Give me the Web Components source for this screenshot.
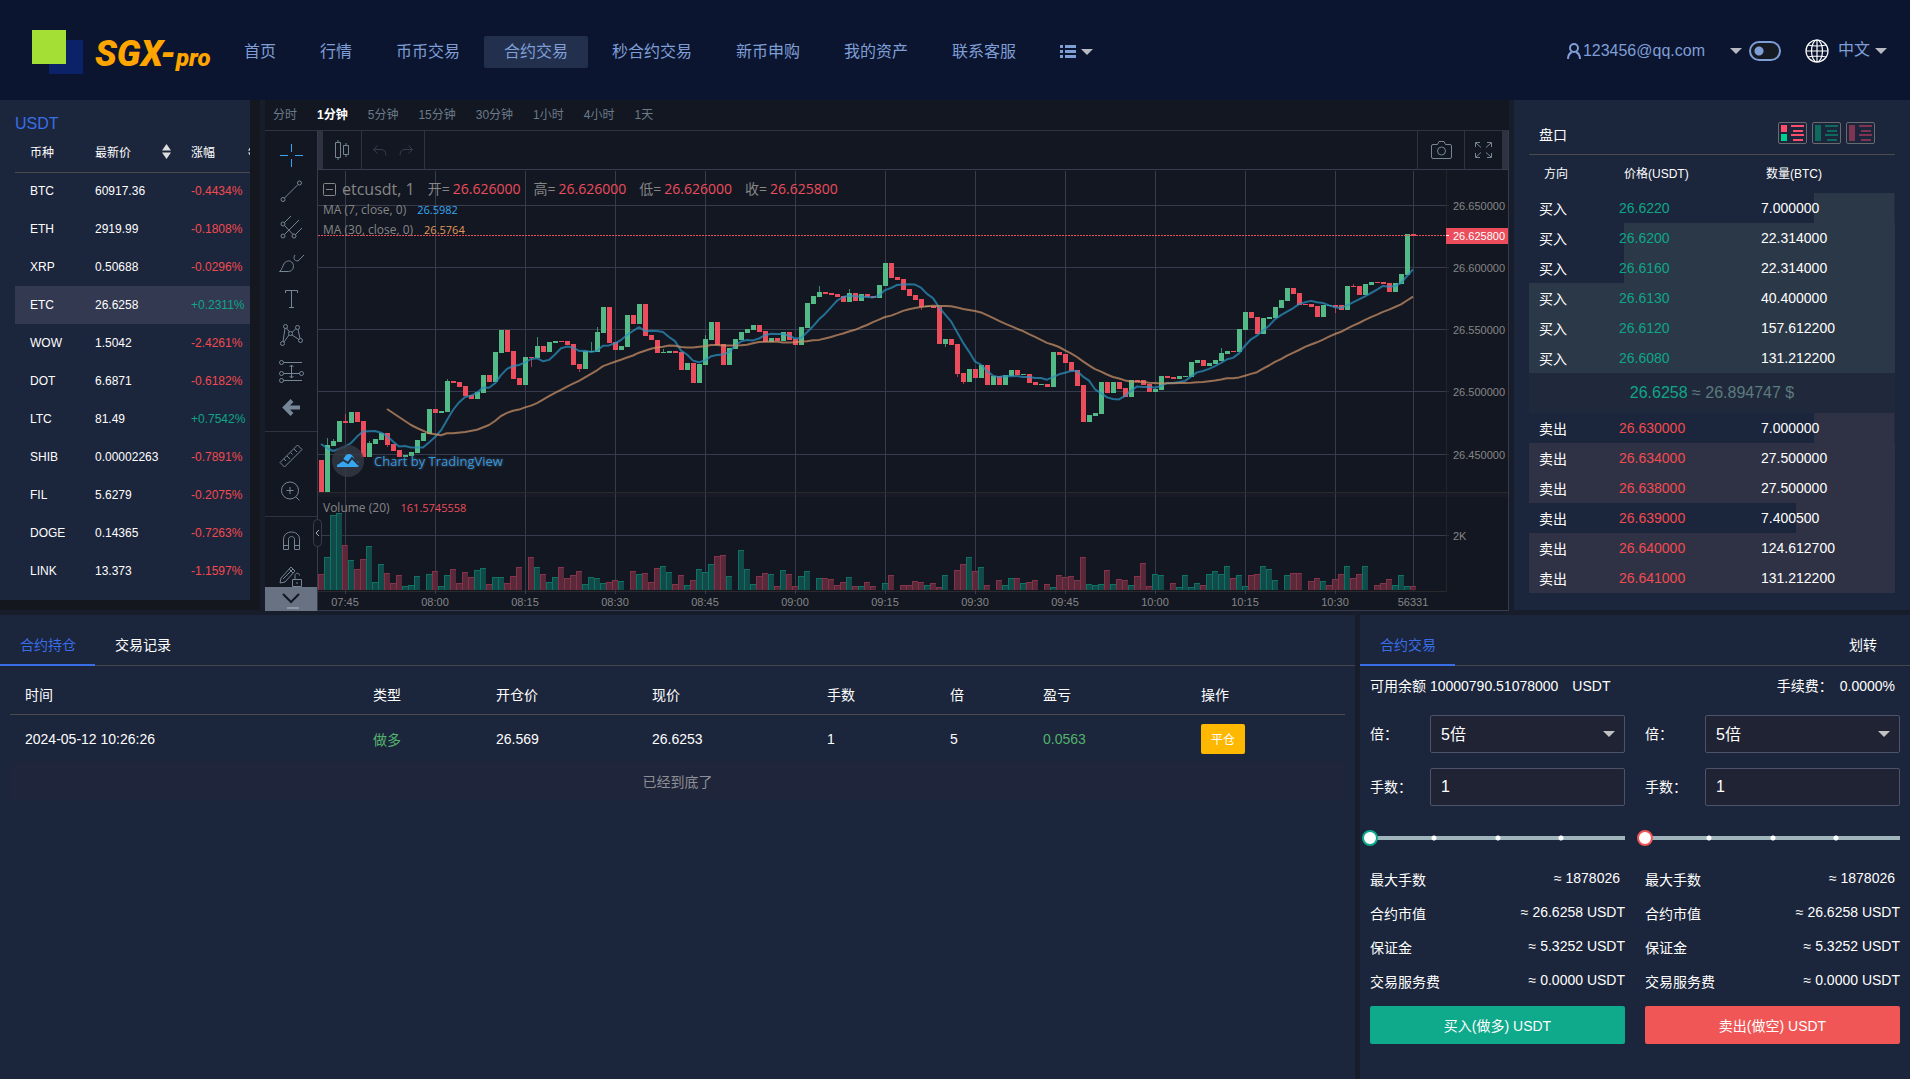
<!DOCTYPE html>
<html lang="zh-CN">
<head>
<meta charset="utf-8">
<title>SGX-pro</title>
<style>
html,body{margin:0;background:#171d2b}
body{font-family:"Liberation Sans","Noto Sans CJK SC",sans-serif;font-size:14px;color:#fff}
</style>
</head>
<body>
<sgx-app></sgx-app>
<script>
const define = (name, html, setup) => customElements.define(name, class extends HTMLElement {
  constructor() {
    super();
    const t = document.createElement('template');
    t.innerHTML = '<style>*{box-sizing:border-box}:host{box-sizing:border-box;display:block}button,input,select{font:inherit;color:inherit}button{cursor:pointer}button[aria-selected=true]{color:#3a6ee8}</style>' + html;
    this.attachShadow({mode: 'open'}).append(t.content.cloneNode(true));
  }
  connectedCallback() { if (setup) setup(this, this.shadowRoot); }
});

/* ---------- top bar ---------- */
const NAV = ['首页', '行情', '币币交易', '合约交易', '秒合约交易', '新币申购', '我的资产', '联系客服'];
define('sgx-topbar', `
<style>
:host{height:100px;background:#0b152f;color:#7f9ed6;font-size:16px}
header{height:100%;display:flex;align-items:center;padding:0 23px 0 32px}
.logo{display:flex;align-items:center;text-decoration:none}
.logo svg{display:block;margin-top:4px}
.word{margin:12px 0 0 11px;color:#ffa500;font:italic 900 36px/36px Roboto,sans-serif;width:117px;white-space:nowrap}
.word small{font-size:24px}
nav{display:flex;gap:4px;margin:3px 0 0 12px;align-items:center}
nav a{color:inherit;text-decoration:none;padding:0 20px;height:32px;line-height:32px;border-radius:2px;white-space:nowrap}
nav a.on{background:#22304e}
button{background:none;border:0;padding:0;display:flex;align-items:center;gap:5px;height:32px;color:inherit}
nav button{padding:0 20px}
.caret{width:0;height:0;border:6px solid transparent;border-top-color:#b8bac2;border-bottom:0}
.side{margin:2px 0 0 auto;display:flex;align-items:center}
.user{gap:2px}.user .caret{margin-left:23px}
.lang{gap:0;margin-left:24px}.lang span{margin:0 5px 0 9px;line-height:20px;padding-bottom:3px}
.switch{appearance:none;width:32px;height:20px;margin:0 0 0 7px;border:2px solid #7f9ed6;border-radius:10px;background:radial-gradient(circle at 8px 8px,#7f9ed6 4px,#161a22 5px)}
</style>
<header>
<a class="logo" href="#" aria-label="SGX-pro"><svg width="52" height="44"><path fill="#0b2269" d="M17 10h34v34H17z"/><path fill="#a3df35" d="M0 0h34v34H0z"/></svg><span class="word">SGX-<small>pro</small></span></a>
<nav>${NAV.map(n => `<a href="#"${n === '合约交易' ? ' class="on"' : ''}>${n}</a>`).join('')}
<button aria-label="更多"><svg width="16" height="13" fill="#7f9ed6"><path d="M0 0h3v3H0zM0 5h3v3H0zM0 10h3v3H0zM5 0h11v3H5zM5 5h11v3H5zM5 10h11v3H5z"/></svg><i class="caret"></i></button></nav>
<div class="side">
<button class="user"><svg width="14" height="17" fill="none" stroke="#7f9ed6" stroke-width="2"><circle cx="7" cy="5" r="4"/><path d="M1 16c0-4 2-6 4-7M13 16c0-4-2-6-4-7"/></svg>123456@qq.com<i class="caret"></i></button>
<input class="switch" type="checkbox" aria-label="主题">
<button class="lang"><svg width="24" height="24" fill="none" stroke="#fff" stroke-width="1.2"><circle cx="12" cy="12" r="11"/><ellipse cx="12" cy="12" rx="5.5" ry="11"/><path d="M12 1v22M1 12h22M3 6q9 2 18 0M3 18q9-2 18 0"/></svg><span>中文</span><i class="caret"></i></button>
</div>
</header>`);

/* ---------- coin list ---------- */
const COINS = [['BTC','60917.36','-0.4434%'],['ETH','2919.99','-0.1808%'],['XRP','0.50688','-0.0296%'],['ETC','26.6258','+0.2311%'],['WOW','1.5042','-2.4261%'],['DOT','6.6871','-0.6182%'],['LTC','81.49','+0.7542%'],['SHIB','0.00002263','-0.7891%'],['FIL','5.6279','-0.2075%'],['DOGE','0.14365','-0.7263%'],['LINK','13.373','-1.1597%']];
const SORT = '<svg width="9" height="15" fill="#ddd" aria-hidden="true"><path d="M4.500 0L9 6.500H0zM0 8.500h9L4.500 15z"/></svg>';
define('sgx-coins', `
<style>
:host{width:260px;height:510px;flex:none;border:solid #14181e;border-width:0 10px 10px 0;background:#1b253b;overflow:hidden;padding:15px 0 0 15px;font-size:12px}
h2{margin:0;font-size:16px;font-weight:400;line-height:18px;color:#3a6ee8}
table{border-collapse:collapse;table-layout:fixed;width:252px}
th,td{padding:0;text-align:left;font-weight:400;height:38px}
th{height:39px;border-bottom:1px solid #4b4a4c;padding-bottom:2px}
th div{display:flex;justify-content:space-between;align-items:center;padding-right:20px}
th:last-child div{padding:0 10px 0 0}
th:first-child,td:first-child{padding-left:15px}
.on{background:#323951}
.d{color:#f04b50}.u{color:#0fa587}
</style>
<h2>USDT</h2>
<table><colgroup><col style="width:80px"><col style="width:96px"><col></colgroup>
<thead><tr><th>币种</th><th><div>最新价${SORT}</div></th><th><div>涨幅${SORT}</div></th></tr></thead>
<tbody>${COINS.map(([a, b, c]) => `<tr${a === 'ETC' ? ' class="on"' : ''}><td>${a}</td><td>${b}</td><td class="${c[0] === '-' ? 'd' : 'u'}">${c}</td></tr>`).join('')}</tbody></table>`);

/* ---------- chart data ---------- */
/* first minute index of the visible range; each candle is colour, open/close edges and an optional wick end */
const FIRST = -4;
const CANDLES = `r1095-1191 g1050-1191w1029 g1038-1053w1032 g978-1041 r978-984w957 g951-984 r951-981 r978-1086 g1044-1086w1037 g1032-1047 g1014-1035 r1014-1050w1056 r1047-1068 r1065-1086 g1080-1086 g1071-1083 g1035-1074 g1014-1038 g942-1017 r942-954 g948-954 g858-951w852 r858-864 r861-876 r873-903 r900-912 g891-912 g840-894 r840-861 g771-861 g705-774 r705-771 r768-852 r849-870 g786-870 r786-790w816 g753-789w726 r753-771 g741-770 g738-745 r738-741 r738-750 r747-810 r807-822w831 g768-822 g768-771w741 g711-771w697 g636-714 r636-744 r741-765 g753-765 g660-756 r660-687 g627-687 r627-722 r720-735 r735-773 g770-774w762 g768-773 r768-774 r771-825 g804-825 r804-864 g807-864 g732-810w720 g681-735 r681-750 r747-810 g759-810 g732-762 g711-735 g702-714 g690-705 r690-710 r708-741 g729-740 r729-738 g711-738 r711-735 r732-750 g696-750 g624-698 g603-627 g591-606w573 r591-597 r594-600 r597-606 r603-621 g594-621w582 r594-618 g597-618 r597-605 r603-609 g570-609 g504-572 r504-549 r546-555 r552-585 r582-603 r600-615 r612-636w645 g633-636 r633-639 r636-747 g732-747w756 r732-750 r747-837w846 r834-861w866 g822-861 r822-849 g810-849 r810-870 g843-870 r843-870 g840-870 g825-843 r825-840 g837-840 r837-864 r861-870 g867-870 r867-876 g771-875 r771-780 r777-804 r801-828 r825-873 r870-981 g960-981 g954-963 g861-957 r861-894 g861-894 r861-882 r879-906 g855-906 r855-861 r855-870 r867-891 g882-891 g843-885 r843-849 r846-852 g843-852 g843-846 g801-846 g795-804 r795-813 g804-813 g795-807 g774-798w759 g768-777 r768-771 g702-771 g651-705 r651-669 r666-717 g669-717 g666-672 g636-669 g615-639 g579-618 r579-597 r594-630 r627-630 r627-636 r633-666 g630-666 g630-633 r630-636w654 r630-645 g573-645 r573-576w567 r573-600 g567-600 g561-570 r561-564 r561-567 r564-591 g564-591 g537-567 g417-540 r417-423`
  .split(' ').map(s => { const m = s.match(/(\w)(\d+)-(\d+)(?:w(\d+))?/); return {up: m[1] === 'g', a: +m[2], b: +m[3], w: m[4] ? +m[4] : null}; });
const VOLUME = `r612 g561 g435 g430 r525 g570 r598 r567 g528 g636 g582 r609 r639 r615 g648 g645 g618 - g612 r603 g648 g615 r598 r639 r606 r621 g600 g594 r642 g621 g621 r639 r618 r591 - r561 g591 r612 g636 g621 r591 r624 r615 r603 g642 g621 g624 g639 r636 r630 g633 - r603 g612 r609 r636 r594 g588 g606 r642 r615 g645 r630 g597 g606 g582 r558 r555 g618 - g540 g597 g642 r618 r609 g612 r648 g600 r612 r648 g618 g603 - g624 r624 r627 r645 r636 g621 r648 g648 r636 r648 - g639 r615 - r645 r645 r633 r636 g645 r639 r651 g615 - r600 r582 g561 r603 g591 r645 - r630 g645 g624 r624 g639 r636 r630 - r642 g651 r615 r621 r618 r630 r561 g642 g645 g642 r600 g642 r627 r630 g645 r618 r579 r648 g612 g615 - r639 g651 g615 g651 g639 r645 g612 g603 g612 g588 r624 g615 g648 r615 r612 g588 g597 g630 - g615 r609 r609 - r633 r624 g633 r645 r627 r612 g588 r624 r612 g588 - r645 r639 r627 g645 g615 g648 r648`.split(' ');
const CLOSES = CANDLES.map(c => c.up ? c.a : c.b);
const average = (i, n) => { const k = i - FIRST; let s = 0; for (let j = k - n + 1; j <= k; j++) s += CLOSES[j]; return s / n; };
const MA7 = [[-4,1047],[-3,1059],[-2,1068],[-1,1062],[0,1055],[1,1044]];
for (let i = 2; i <= 178; i++) MA7.push([i, average(i, 7)]);
const MA30 = [[7,942],[9,966],[11,990],[12,999],[14,1015],[16,1021],[17,1015],[18,1015],[20,1011],[22,1004],[24,990],[25,978]];
for (let i = 26; i <= 178; i++) MA30.push([i, average(i, 30)]);

function plot(W) {
  const X = i => W - 95 - 6 * (178 - i), Y = v => Math.round(v / 3) - 75;
  const rect = (x, y, w, h, f, more = '') => `<rect x="${x}" y="${y}" width="${w}" height="${h}" fill="${f}" ${more}/>`;
  const text = (x, y, s, more = '') => `<text x="${x}" y="${y}" ${more}>${s}</text>`;
  const axis = W - 62, G = '#363c4e';
  let o = '';
  o += rect(0, 323, W, 4, '#181b26');
  for (let i = 0; i <= 165; i += 15) o += rect(X(i), 1, 1, 420, G);
  o += rect(X(178), 1, 1, 420, G);
  const rows = [[35, '26.650000'], [97, '26.600000'], [159, '26.550000'], [221, '26.500000'], [284, '26.450000'], [365, '2K']];
  for (const [y, s] of rows) o += rect(0, y, axis, 1, G) + rect(axis, y, 3, 1, '#2c2c2f') + text(axis + 7, y + 5, s);
  VOLUME.forEach((s, k) => {
    if (s === '-') return;
    const up = s[0] === 'g', y = Math.round(s.slice(1) / 3) + 200, x = X(k + FIRST) - 3;
    o += rect(x, y, 6, 420 - y, up ? '#0f7263' : '#84334a') + rect(x + 1, y + 1, 5, 419 - y, up ? '#104b49' : '#592939');
  });
  o += rect(0, 322, W, 1, '#2a2a2d') + rect(0, 421, axis, 1, '#2a2a2d') + rect(axis, 0, 1, 422, '#242529');
  CANDLES.forEach((c, k) => {
    const f = c.up ? '#53b987' : '#eb4d5c', x = X(k + FIRST), y = Y(c.a);
    if (c.w) { const w = Y(c.w); o += rect(x, Math.min(w, y), 1, Math.abs(w - y), f, 'opacity=".7"'); }
    o += rect(x - 2, y, 5, Math.max(1, Y(c.b) - y), f);
  });
  const line = (p, f) => `<polyline fill="none" stroke="${f}" stroke-width="2" stroke-linejoin="round" opacity=".72" points="${p.map(([i, v]) => X(i) + ',' + Math.round(v / 3 * 10 - 750) / 10).join(' ')}"/>`;
  o += line(MA7, '#2b91c0') + line(MA30, '#cc9167');
  o += `<path d="M0 65.500H${axis}" stroke="#eb4d5c" stroke-dasharray="2 1"/>`;
  o += rect(axis, 58, 62, 16, '#eb4d5c') + rect(axis, 65, 3, 1, '#fff') + text(axis + 7, 70, '26.625800', 'style="fill:#fff"');
  ['07:45','08:00','08:15','08:30','08:45','09:00','09:15','09:30','09:45','10:00','10:15','10:30'].forEach((s, k) => o += rect(X(k * 15), 421, 1, 3, G) + text(X(k * 15), 436, s, 'text-anchor="middle"'));
  o += text(X(178), 436, '56331', 'text-anchor="middle"');
  return o;
}

const ico = d => `<svg width="28" height="28" viewBox="0 0 28 28" fill="none" stroke="#758696">${d}</svg>`;
const TOOLS = [[
  ['十字线', '<path stroke="#37a6ef" d="M3 14.500h8M18 14.500h8M14.500 3v8M14.500 18v8"/>'],
  ['趋势线', '<circle cx="6" cy="22.500" r="2"/><circle cx="22.500" cy="6" r="2"/><path d="M7.500 21L21 7.500"/>'],
  ['叉形线', '<circle cx="6" cy="11" r="2"/><circle cx="6" cy="23" r="2"/><circle cx="17" cy="23" r="2"/><path d="M7.500 9.500l6.500-6.500M7.500 21.500L22 7M7.500 12.500l8.500 9M18.500 21.500L25 15"/>'],
  ['画笔', '<path d="M2.500 22.500c3-2 3-6 5-8.500s6-3 8 0 1 8-4 8.500zM27 6l-6 6c-4 0-5-3-3-6"/>'],
  ['文字', '<path d="M8.500 8V5.500h12V8M14.500 5.500v17M12 22.500h5"/>'],
  ['形态', '<circle cx="8.500" cy="5.500" r="2"/><circle cx="20.500" cy="6.500" r="2"/><circle cx="5.500" cy="22.500" r="2"/><circle cx="23.500" cy="19.500" r="2"/><circle cx="13.500" cy="12.500" r="2"/><path d="M6 20.500L8 7.500M9.500 7l3 4M15 11.500l4-4M21 8.500l2 9M15 14l7 4.500M12 14l-5 7"/>'],
  ['预测', '<circle cx="4.500" cy="5.500" r="2"/><circle cx="4.500" cy="16.500" r="2"/><circle cx="24.500" cy="16.500" r="2"/><circle cx="4.500" cy="23.500" r="2"/><path d="M6.500 5.500H25M6.500 16.500h16M6.500 23.500H25M14.500 8v13M12.500 10l2-2 2 2M12.500 19l2 2 2-2"/>'],
  ['返回', '<path stroke-width="4" d="M15 7.500L8 14.500l7 7M9 14.500h14"/>']
], [
  ['测量', '<path d="M3 20.500L20.500 3l4.500 4.500L7.500 25zM7 17l2 2M10 14l3 3M13.500 10.500l2 2M17 7l3 3"/>'],
  ['放大', '<circle cx="13" cy="12.500" r="8.500"/><path d="M19 19l3.500 3.500M13 9v7M9.500 12.500h7"/>']
], [
  ['磁铁', '<path d="M6.500 22.500v-10c0-10 16-10 16 0v10h-5v-10c0-4-6-4-6 0v10zM6.500 18.500h5M17.500 18.500h5"/>'],
  ['锁定', '<path d="M4 15L14 4l4 4L8 19l-5 1zM6 16L16 6M12 6l4 4M15.500 16.500h9v7h-9zM18 16.500v-4c0-3 4.500-3 4.500 0M20 19v2"/>']
]];
const PERIODS = ['分时', '1分钟', '5分钟', '15分钟', '30分钟', '1小时', '4小时', '1天'];
define('sgx-chart', `
<style>
:host{flex:1;min-width:0;height:511px;margin:0 5px;display:flex;flex-direction:column;background:#131722;font-size:12px}
button{background:none;border:0;padding:0;display:flex;align-items:center;justify-content:center}
.periods{height:31px;flex:none;border-bottom:1px solid #2f3241;display:flex;gap:20px;padding:0 8px 3px;color:#6b7b8a}
.periods .on{color:#fff;font-weight:700}
.main{flex:1;display:flex;min-height:0}
.rail{position:relative;width:53px;flex:none;border-right:1px solid #363c4e}
.tools{height:100%;overflow:hidden}
.group{padding:6px 0;border-bottom:1px solid #2f3241}
.group button{width:52px;height:36px}
.more{position:absolute;left:0;bottom:0;width:52px;height:24px;background:#687282}
.fold{position:absolute;left:48px;top:388px;width:9px;height:28px;border:1px solid #363c4e;border-radius:5px;background:#131722;z-index:1}
.body{flex:1;min-width:0;display:flex;flex-direction:column;border-right:1px solid #363c4e;border-bottom:1px solid #363c4e}
.bar{height:39px;flex:none;border-bottom:1px solid #363c4e;display:flex;background:linear-gradient(#2f3241,#2f3241) left/5px 100% no-repeat,linear-gradient(#2f3241,#2f3241) right/5px 100% no-repeat;padding:0 5px}
.bar>*{border-right:1px solid #2f3241}
.candle{width:39px}.undo{display:flex;width:63px;justify-content:space-evenly}
.cam{width:48px;margin-left:auto;border-left:1px solid #2f3241}.full{width:38px}
.pane{position:relative;flex:1;min-height:0}
.plot{display:block;width:100%;height:100%;font-family:"Liberation Sans",sans-serif;font-size:11px;fill:#868686}
.legend{position:absolute;left:5px;top:8px;font-family:"Open Sans","Noto Sans CJK SC",sans-serif;color:#868686}
.legend div{line-height:20px;height:20px;white-space:nowrap;display:flex;align-items:center}
.legend b{font-weight:400;font-size:11px;margin-left:11px}
.legend .t{font-size:16px;height:22px}
.t svg{margin-right:6px}
.t span{font-size:14px;margin-left:13px}.legend .t b{font-size:14px;color:#eb4d5c;margin-left:3px}
.legend.vol{top:328px}
.tv{position:absolute;left:14px;top:275px;display:flex;align-items:center;gap:10px;color:#3197dd;font:13px/32px "Open Sans",sans-serif;text-decoration:none;text-shadow:0 0 3px #3c4250,0 0 3px #3c4250}
</style>
<div class="periods">${PERIODS.map(p => `<button${p === '1分钟' ? ' class="on"' : ''}>${p}</button>`).join('')}</div>
<div class="main">
<div class="rail"><div class="tools">${TOOLS.map(g => `<div class="group">${g.map(([n, d]) => `<button aria-label="${n}">${ico(d)}</button>`).join('')}</div>`).join('')}</div>
<button class="more" aria-label="向下"><svg width="20" height="20" fill="none" stroke="#131722" stroke-width="2"><path d="M2 5l8 8 8-8"/><path stroke="#8d97a5" d="M6 19h12"/></svg></button>
<button class="fold" aria-label="收起"><svg width="5" height="8" fill="none" stroke="#a5adb8"><path d="M4 1L1 4l3 3"/></svg></button></div>
<div class="body">
<div class="bar"><button class="candle" aria-label="K线样式"><svg width="16" height="20" fill="none" stroke="#758696"><path d="M1.500 2.500h5v15h-5zM4 0v2.500M4 17.500V20M9.500 5.500h5v9h-5zM12 3v2.500M12 14.500V17"/></svg></button>
<div class="undo"><button aria-label="撤销"><svg width="14" height="11" fill="none" stroke="#363c4e"><path d="M4.500 .5L.5 4.500l4 4M.5 4.500H8q5 0 5 6"/></svg></button><button aria-label="重做"><svg width="14" height="11" fill="none" stroke="#363c4e"><path d="M9.500 .5l4 4-4 4M13.500 4.500H6q-5 0-5 6"/></svg></button></div>
<button class="cam" aria-label="截图"><svg width="21" height="18" fill="none" stroke="#758696"><path d="M2 3.500h4.500l1.500-3h5l1.500 3H19q1.500 0 1.500 1.500v11q0 1.500-1.500 1.500H2Q.5 17.500 .5 16V5Q.5 3.500 2 3.500z"/><circle cx="10.500" cy="10" r="4"/></svg></button>
<button class="full" aria-label="全屏"><svg width="17" height="16" fill="none" stroke="#758696"><path d="M.5 5V.5H5M12 .5h4.500V5M.5 11v4.500H5M12 15.500h4.500V11M1 1l5 4.500M16 1l-5 4.500M1 15l5-4.500M16 15l-5-4.500"/></svg></button></div>
<div class="pane"><svg class="plot" role="img" aria-label="K线图"></svg>
<div class="legend"><div class="t"><svg width="13" height="13" fill="none" stroke="#868686"><rect x=".5" y=".5" width="12" height="12" rx="1"/><path d="M3 6.500h7"/></svg>etcusdt, 1<span>开=</span><b>26.626000</b><span>高=</span><b>26.626000</b><span>低=</span><b>26.626000</b><span>收=</span><b>26.625800</b></div>
<div>MA (7, close, 0)<b style="color:#37a6ef">26.5982</b></div><div>MA (30, close, 0)<b style="color:#e09a5b">26.5764</b></div></div>
<div class="legend vol"><div>Volume (20)<b style="color:#eb4d5c">161.5745558</b></div></div>
<a class="tv" href="#"><svg width="32" height="32"><circle cx="16" cy="16" r="16" fill="#363a45" opacity=".8"/><path fill="#37a6ef" d="M5 21q0-5 5-5l4-6q5-3 8 3l1 3q4 0 4 4 0 2-2 2H5z"/><path stroke="#22303f" stroke-width="2" fill="none" d="M5 19l6-4 5 3 4-5 7 7"/></svg>Chart by TradingView</a>
</div></div></div>`, (host, root) => {
  const svg = root.querySelector('.plot');
  const draw = () => { const w = Math.round(svg.getBoundingClientRect().width); if (w) svg.innerHTML = plot(w); };
  draw();
  new ResizeObserver(draw).observe(host);
});

/* ---------- order book ---------- */
const BUY = [['26.6220','7.000000','22%'],['26.6200','22.314000','74%'],['26.6160','22.314000','74%'],['26.6130','40.400000','100%'],['26.6120','157.612200','100%'],['26.6080','131.212200','100%']];
const SELL = [['26.630000','7.000000','22%'],['26.634000','27.500000','100%'],['26.638000','27.500000','100%'],['26.639000','7.400500','27%'],['26.640000','124.612700','100%'],['26.641000','131.212200','100%']];
const bookRows = (list, side, cls) => list.map(([p, q, w]) => `<tr class="${cls}" style="--w:${w}"><td>${side}</td><td>${p}</td><td>${q}</td></tr>`).join('');
define('sgx-book', `
<style>
:host{width:396px;height:510px;flex:none;background:#1b253b;padding:15px 15px 0}
.head{height:40px;border-bottom:1px solid #4b4a4c;display:flex;align-items:center;padding:0 20px 0 10px;gap:5px}
h2{font-size:14px;font-weight:400;margin:0 auto 0 0;padding-bottom:2px}
.head button{width:29px;height:22px;padding:0;border:1px solid #6a6a6c;border-radius:2px;background:none;margin-bottom:4px}
.head svg{display:block}
.off svg{opacity:.5}
table{width:100%;border-collapse:collapse;table-layout:fixed}
th,td{padding:0 0 1px;text-align:left;font-weight:400;height:30px}
th{font-size:12px;height:38px;padding-bottom:4px}
th:first-child{padding-left:15px}th+th{padding-left:5px}
td:first-child{padding-left:10px}
tr.b{background:linear-gradient(#2b3847,#2b3847) right/var(--w) 100% no-repeat}
tr.s{background:linear-gradient(#2f3245,#2f3245) right/var(--w) 100% no-repeat}
.b td:nth-child(2){color:#0fa587}.s td:nth-child(2){color:#f04b50}
tr.mid td{height:40px;background:#20293b;text-align:center;font-size:16px;color:#5b7b7d;padding:0 0 1px}
.mid b{font-weight:400;color:#0fa587}
</style>
<div class="head"><h2>盘口</h2>
<button aria-label="全部"><svg width="27" height="20"><path fill="#ff4d6a" d="M2 2h6v7H2zM12 2h13v2H12zM14 7h10v2H14zM12 11h13v2H12zM14 16h10v2H14z"/><path fill="#00d08d" d="M2 11h6v7H2z"/></svg></button>
<button class="off" aria-label="买盘"><svg width="27" height="20"><path fill="#00b080" d="M2 2h6v16H2zM12 2h13v2H12zM14 7h10v2H14zM12 11h13v2H12zM14 16h10v2H14z"/></svg></button>
<button class="off" aria-label="卖盘"><svg width="27" height="20"><path fill="#e34668" d="M2 2h6v16H2zM12 2h13v2H12zM14 7h10v2H14zM12 11h13v2H12zM14 16h10v2H14z"/></svg></button></div>
<table><colgroup><col style="width:90px"><col style="width:142px"><col></colgroup>
<thead><tr><th>方向</th><th>价格(USDT)</th><th>数量(BTC)</th></tr></thead>
<tbody>${bookRows(BUY, '买入', 'b')}<tr class="mid"><td colspan="3"><b>26.6258</b> ≈ 26.894747 $</td></tr>${bookRows(SELL, '卖出', 's')}</tbody></table>`);

/* ---------- tab strip shared by the lower panels ---------- */
define('sgx-tabs', `
<style>
:host{display:flex;height:51px;padding-top:10px;background:linear-gradient(#45464b,#45464b) bottom/100% 1px no-repeat}
::slotted(button){background:none;border:0;border-bottom:2px solid transparent;padding:0 19px 2px 20px;height:41px}
::slotted(button[aria-selected=true]){border-bottom-color:#3a6ee8}
::slotted(.end){margin-left:auto}
</style><slot></slot>`);

/* ---------- positions ---------- */
define('sgx-positions', `
<style>
:host{flex:1;min-width:0;background:#1b253b}
.in{padding:10px 10px 0}
table{width:100%;border-collapse:collapse;table-layout:fixed}
th,td{padding:1px 15px 0;text-align:left;font-weight:400;height:48px}
th{height:38px;border-bottom:1px solid #4b4a4c;padding:0 15px 1px}
.g{color:#53b26c}
td button{width:44px;height:30px;border:0;border-radius:2px;background:#ffb800;font-size:12px;padding:0 0 1px;display:block}
p{margin:0;height:38px;line-height:40px;text-align:center;background:#1f253a;color:#8e8f94}
</style>
<sgx-tabs><button role="tab" aria-selected="true">合约持仓</button><button role="tab">交易记录</button></sgx-tabs>
<div class="in"><table><colgroup>${[348, 123, 156, 175, 123, 93, 158].map(w => `<col style="width:${w}px">`).join('')}<col></colgroup>
<thead><tr><th>时间</th><th>类型</th><th>开仓价</th><th>现价</th><th>手数</th><th>倍</th><th>盈亏</th><th>操作</th></tr></thead>
<tbody><tr><td>2024-05-12 10:26:26</td><td class="g">做多</td><td>26.569</td><td>26.6253</td><td>1</td><td>5</td><td class="g">0.0563</td><td><button>平仓</button></td></tr></tbody></table>
<p>已经到底了</p></div>`);

/* ---------- order form ---------- */
define('sgx-order', `
<style>
:host{flex:1;min-width:0;--c:#0fa98c}
:host([side=sell]){--c:#f15656}
.f{display:flex;align-items:center;height:38px;margin-bottom:15px}
.f label{width:60px;flex:none;padding-bottom:2px}
.box{position:relative;flex:1;min-width:0}
.box select,.box input{appearance:none;display:block;width:100%;height:38px;border:1px solid #4e536b;border-radius:2px;background:#1f2334;font-size:16px;padding:0 10px;outline:0}
.sel::after{content:"";position:absolute;right:10px;top:16px;border:6px solid transparent;border-top-color:#c2c2c2;border-bottom:0;pointer-events:none}
.slide{--dot:radial-gradient(circle,#fff 2px,transparent 3px);height:16px;margin:24px 0 17px;background:var(--dot) calc(25% - 2px) 50%/8px 8px no-repeat,var(--dot) 50% 50%/8px 8px no-repeat,var(--dot) calc(75% + 2px) 50%/8px 8px no-repeat,linear-gradient(#a0b4bc,#a0b4bc) 0 50%/100% 4px no-repeat}
.slide input{appearance:none;display:block;width:calc(100% + 16px);height:16px;margin:0 -8px;background:none}
.slide input::-webkit-slider-thumb{appearance:none;width:16px;height:16px;border-radius:50%;border:2px solid var(--c);background:#fff}
dl{margin:0}
dl div{display:flex;justify-content:space-between;height:34px}
dt{line-height:34px}
dd{margin:0;white-space:pre;line-height:30px}
dl div:first-child dd{padding-right:5px}
.go{width:100%;height:38px;margin-top:7px;padding:0 0 1px;border:0;border-radius:2px;background:var(--c);display:block}
</style>
<div class="f"><label for="lev">倍：</label><div class="box sel"><select id="lev"><option>5倍</option><option>10倍</option></select></div></div>
<div class="f"><label for="qty">手数：</label><div class="box"><input id="qty" value="1"></div></div>
<div class="slide"><input type="range" min="0" max="100" value="0" aria-label="比例"></div>
<dl><div><dt>最大手数</dt><dd>≈ 1878026</dd></div><div><dt>合约市值</dt><dd>≈ 26.6258 USDT</dd></div><div><dt>保证金</dt><dd>≈ 5.3252 USDT</dd></div><div><dt>交易服务费</dt><dd>≈ 0.0000 USDT</dd></div></dl>
<button class="go"><slot></slot></button>`);

define('sgx-trade', `
<style>
:host{width:550px;flex:none;background:#1b253b}
.bal{display:flex;justify-content:space-between;height:40px;line-height:40px;padding:0 15px 0 10px}
.bal b{font-weight:400;margin-left:7px}
.bal span:first-child b{margin-left:14px}
.forms{display:flex;gap:20px;padding:9px 10px 0}
.end{padding-right:33px}
</style>
<sgx-tabs><button role="tab" aria-selected="true">合约交易</button><button class="end">划转</button></sgx-tabs>
<div class="bal"><span>可用余额 10000790.51078000<b>USDT</b></span><span>手续费：<b>0.0000%</b></span></div>
<div class="forms"><sgx-order side="buy">买入(做多) USDT</sgx-order><sgx-order side="sell">卖出(做空) USDT</sgx-order></div>`);

define('sgx-app', `
<style>
:host{display:flex;flex-direction:column;min-height:100vh}
.top{display:flex;height:515px;align-items:flex-start}
.low{display:flex;flex:1;gap:5px;align-items:stretch}
</style>
<sgx-topbar></sgx-topbar>
<div class="top"><sgx-coins></sgx-coins><sgx-chart></sgx-chart><sgx-book></sgx-book></div>
<div class="low"><sgx-positions></sgx-positions><sgx-trade></sgx-trade></div>`);
</script>
</body>
</html>
